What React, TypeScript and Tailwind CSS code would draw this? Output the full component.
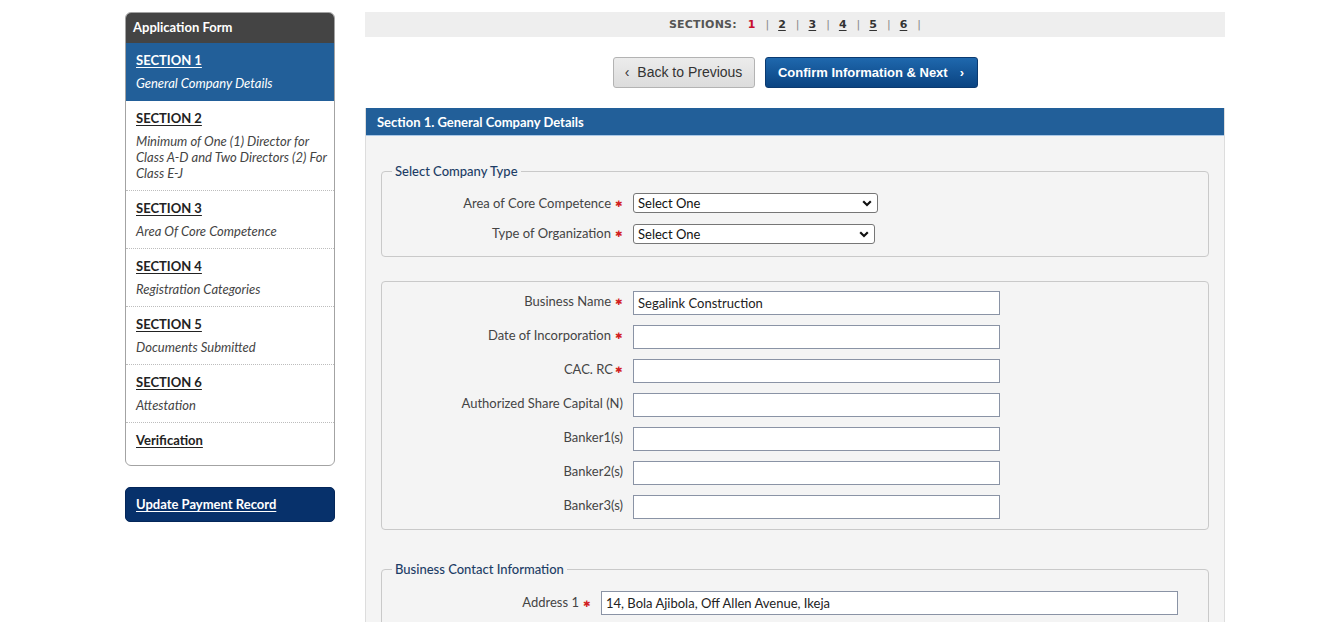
import React from 'react';

const sideItems = [
  { title: 'SECTION 1', desc: 'General Company Details', active: true },
  { title: 'SECTION 2', desc: 'Minimum of One (1) Director for Class A-D and Two Directors (2) For Class E-J' },
  { title: 'SECTION 3', desc: 'Area Of Core Competence' },
  { title: 'SECTION 4', desc: 'Registration Categories' },
  { title: 'SECTION 5', desc: 'Documents Submitted' },
  { title: 'SECTION 6', desc: 'Attestation' },
];

const businessRows = [
  { label: 'Business Name', req: true, value: 'Segalink Construction' },
  { label: 'Date of Incorporation', req: true, value: '' },
  { label: 'CAC. RC', req: true, value: '', tight: true },
  { label: 'Authorized Share Capital (N)', req: false, value: '' },
  { label: 'Banker1(s)', req: false, value: '' },
  { label: 'Banker2(s)', req: false, value: '' },
  { label: 'Banker3(s)', req: false, value: '' },
];

function Star() {
  return <span className="text-[9px] leading-none text-[#d21f1f]">✱</span>;
}

function Chevron() {
  return (
    <svg width="10" height="7" viewBox="0 0 10 7" className="pointer-events-none absolute right-[6px] top-[7px]">
      <path d="M1.2 1.3 5 5l3.8-3.7" fill="none" stroke="#111" strokeWidth="2.2" />
    </svg>
  );
}

function SelectBox({ width }: { width: string }) {
  return (
    <div className={`relative ${width}`}>
      <select className="h-[20px] w-full appearance-none rounded-[3px] border border-[#767676] bg-white pl-[4px] text-[13px] leading-[18px] text-[#111]">
        <option>Select One</option>
      </select>
      <Chevron />
    </div>
  );
}

function Sidebar() {
  return (
    <aside className="w-[210px] shrink-0">
      <div className="overflow-hidden rounded-[6px] border border-[#a3a3a3] bg-white">
        <div className="flex h-[30px] items-center bg-[#444444] pl-[7px] text-[13px] font-bold text-white">
          Application Form
        </div>
        {sideItems.map((it) => (
          <div
            key={it.title}
            className={
              it.active
                ? 'bg-[#225f99] pb-[10px] pl-[10px] pr-[6px] pt-[8px] text-white'
                : 'border-b border-dotted border-[#bdbdbd] pb-[9px] pl-[10px] pr-[6px] pt-[8px] text-[#222]'
            }
          >
            <div className="text-[13px] font-bold leading-[18px] underline underline-offset-2">{it.title}</div>
            <div className={it.active ? 'mt-[6px] text-[13px] italic leading-4 text-white' : 'mt-[6px] text-[13px] italic leading-4 text-[#444]'}>
              {it.desc}
            </div>
          </div>
        ))}
        <div className="h-[42px] pl-[10px] pt-[8px]">
          <div className="text-[13px] font-bold leading-[18px] text-[#222] underline underline-offset-2">Verification</div>
        </div>
      </div>
      <div className="mt-[21px] flex h-[35px] items-center rounded-[5px] border border-[#042659] bg-[#07316b] pl-[10px] text-[13px] font-bold text-white underline underline-offset-2">
        Update Payment Record
      </div>
    </aside>
  );
}

function SectionsBar() {
  const nums = ['2', '3', '4', '5', '6'];
  return (
    <div className="flex h-[25px] items-center justify-center bg-[#eeeeee] pt-[2px] font-['DejaVu_Sans',Verdana,sans-serif] text-[11px]">
      <span className="font-bold tracking-[0.2px] text-[#555]">SECTIONS:</span>
      <span className="ml-[11px] font-bold text-[#c8102e]">1</span>
      {nums.map((n) => (
        <React.Fragment key={n}>
          <span className="ml-[10px] mr-[9px] text-[#888]">|</span>
          <span className="font-bold text-[#333] underline underline-offset-2">{n}</span>
        </React.Fragment>
      ))}
      <span className="ml-[10px] text-[#888]">|</span>
    </div>
  );
}

function NavButtons() {
  return (
    <div className="mt-[20px] flex justify-center gap-[10px] font-['Liberation_Sans',Arial,sans-serif]">
      <button className="flex h-[31px] w-[142px] items-center justify-center gap-[8px] rounded-[3px] border border-[#b3b3b3] bg-gradient-to-b from-[#ececec] to-[#dcdcdc] text-[14px] text-[#333]">
        <span>‹</span>
        <span>Back to Previous</span>
      </button>
      <button className="flex h-[31px] w-[213px] items-center justify-center gap-[12px] rounded-[3px] border border-[#0b3a70] bg-gradient-to-b from-[#1f68ad] to-[#0a4482] text-[13px] font-bold text-white">
        <span>Confirm Information &amp; Next</span>
        <span>›</span>
      </button>
    </div>
  );
}

function Label({ text, req, tight }: { text: string; req: boolean; tight?: boolean }) {
  return (
    <div className={tight ? 'flex items-center justify-end gap-[2px]' : 'flex items-center justify-end gap-[4px]'}>
      <span>{text}</span>
      {req && <Star />}
    </div>
  );
}

function FormPanel() {
  return (
    <div className="mt-[20px] border-x border-[#dddddd]">
      <div className="flex h-[28px] items-center border-b border-[#a9c7e6] bg-[#225f99] pl-[11px] pt-[2px] text-[13px] font-bold text-white">
        Section 1. General Company Details
      </div>
      <div className="bg-[#f4f4f4] px-[15px] pb-[20px] pt-[26px] text-[13px] text-[#444]">
        <fieldset className="rounded-[4px] border border-[#c9c9c9] px-[10px] pb-[12px] pt-[13px]">
          <legend className="px-[3px] leading-[18px] font-medium text-[#1d3d66]">Select Company Type</legend>
          <div className="grid grid-cols-[231px_1fr] items-center gap-x-[10px] gap-y-[10px]">
            <Label text="Area of Core Competence" req />
            <SelectBox width="w-[245px]" />
            <Label text="Type of Organization" req />
            <SelectBox width="w-[242px]" />
          </div>
        </fieldset>

        <fieldset className="mt-[24px] rounded-[4px] border border-[#c9c9c9] px-[10px] pb-[10px] pt-[9px]">
          <div className="grid grid-cols-[231px_1fr] items-start gap-x-[10px] gap-y-[10px]">
            {businessRows.map((r) => (
              <React.Fragment key={r.label}>
                <div className="pt-px leading-[18px]">
                  <Label text={r.label} req={r.req} tight={r.tight} />
                </div>
                <input
                  readOnly
                  value={r.value}
                  className="h-[24px] w-[367px] border border-[#8a93a5] bg-white pl-[4px] text-[13px] text-[#222]"
                />
              </React.Fragment>
            ))}
          </div>
        </fieldset>

        <fieldset className="mt-[30px] rounded-[4px] border border-[#c9c9c9] px-[10px] pb-[12px] pt-[13px]">
          <legend className="px-[3px] leading-[18px] font-medium text-[#1d3d66]">Business Contact Information</legend>
          <div className="grid grid-cols-[199px_1fr] items-center gap-x-[10px]">
            <Label text="Address 1" req />
            <input
              readOnly
              value="14, Bola Ajibola, Off Allen Avenue, Ikeja"
              className="h-[24px] w-[577px] border border-[#8a93a5] bg-white pl-[4px] text-[13px] text-[#222]"
            />
          </div>
        </fieldset>
      </div>
    </div>
  );
}

export default function App() {
  return (
    <div className="min-h-screen bg-white pt-[12px] font-['Lato','Noto_Sans',sans-serif]">
      <div className="ml-[125px] flex w-[1100px] items-start gap-[30px]">
        <Sidebar />
        <main className="w-[860px]">
          <SectionsBar />
          <NavButtons />
          <FormPanel />
        </main>
      </div>
    </div>
  );
}
